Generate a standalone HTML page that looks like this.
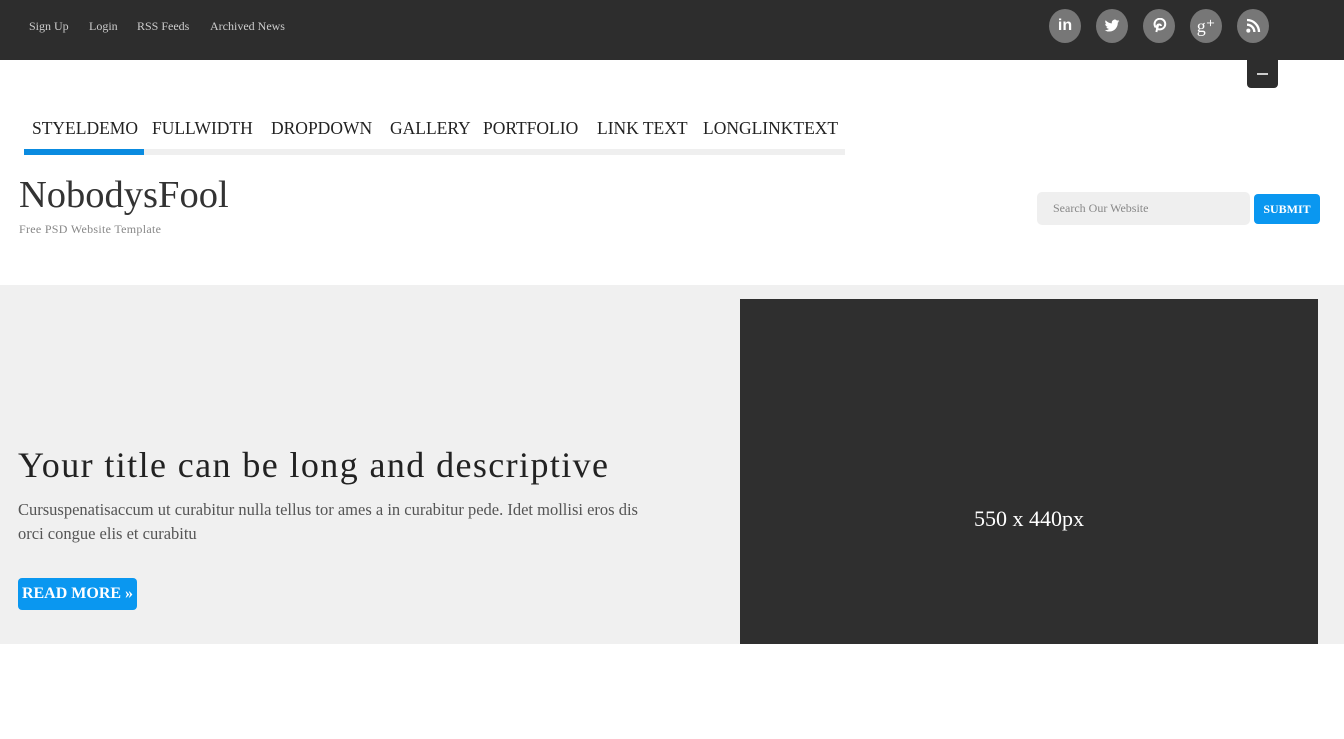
<!DOCTYPE html>
<html><head><style>
body{margin:0;width:1344px;height:644px;overflow:hidden;font-family:"Liberation Serif",serif;background:#fff;position:relative}
.top{position:absolute;left:0;top:0;width:1344px;height:60px;background:#2d2d2d}
.tl{position:absolute;top:19px;font-size:12px;color:#ccc}
.ic{position:absolute;top:9px;width:32px;height:34px;border-radius:50%;background:#777;color:#fff;text-align:center;line-height:34px;font-family:"Liberation Sans",sans-serif;font-weight:bold;font-size:16px}
.ic svg{position:absolute;left:8px;top:9px}
.tab{position:absolute;left:1247px;top:60px;width:31px;height:28px;background:#2d2d2d;border-radius:0 0 4px 4px}
.tab:after{content:"";position:absolute;left:10px;top:13px;width:11px;height:2px;background:#ccc}
.nav{position:absolute;top:118px;font-size:17.5px;color:#222}
.bar{position:absolute;left:24px;top:149px;width:821px;height:6px;background:#efefef}
.bar i{position:absolute;left:0;top:0;width:120px;height:6px;background:#0a8be0}
.logo{position:absolute;left:19px;top:173px;font-size:38.5px;color:#333}
.sub{position:absolute;left:19px;top:222px;font-size:12px;color:#888;letter-spacing:.3px}
.search{position:absolute;left:1037px;top:192px;width:213px;height:33px;background:#efefef;border-radius:5px;font-size:12px;color:#888;line-height:33px;text-indent:16px}
.btn{position:absolute;left:1254px;top:194px;width:66px;height:30px;background:#0a97f0;border-radius:4px;color:#fff;font-weight:bold;font-size:12px;text-align:center;line-height:30px}
.hero{position:absolute;left:0;top:285px;width:1344px;height:359px;background:#f0f0f0}
.img{position:absolute;left:740px;top:299px;width:578px;height:345px;background:#2f2f2f;color:#fff;font-size:22px;text-align:center;line-height:440px}
h1{position:absolute;left:18px;top:444px;margin:0;font-weight:normal;font-size:36px;color:#222;letter-spacing:1.4px}
.p{position:absolute;left:18px;top:498px;width:620px;font-size:16.5px;line-height:24px;color:#555}
.rm{position:absolute;left:18px;top:578px;width:119px;height:32px;background:#0a97f0;border-radius:4px;color:#fff;font-weight:bold;font-size:16px;text-align:center;line-height:32px}
</style></head><body>
<div class="top"></div>
<span class="tl" style="left:29px">Sign Up</span><span class="tl" style="left:89px">Login</span><span class="tl" style="left:137px">RSS Feeds</span><span class="tl" style="left:210px">Archived News</span>
<div class="ic" style="left:1049px">in</div>
<div class="ic" style="left:1096px"><svg width="16" height="16" viewBox="0 0 24 24"><path fill="#fff" d="M23 4.6a9 9 0 0 1-2.6.7 4.5 4.5 0 0 0 2-2.5 9 9 0 0 1-2.9 1.1A4.5 4.5 0 0 0 11.8 8 12.8 12.8 0 0 1 2.5 3.3a4.5 4.5 0 0 0 1.4 6 4.5 4.5 0 0 1-2-.6 4.5 4.5 0 0 0 3.6 4.5 4.5 4.5 0 0 1-2 .1 4.5 4.5 0 0 0 4.2 3.1A9 9 0 0 1 1 18.3 12.8 12.8 0 0 0 7.9 20.3c8.3 0 12.8-6.9 12.8-12.8v-.6A9 9 0 0 0 23 4.6z"/></svg></div>
<div class="ic" style="left:1143px"><svg width="16" height="16" viewBox="0 0 24 24"><path fill="none" stroke="#fff" stroke-width="3" d="M8 21l3-12M7 14a8 8 0 1 1 5 3c-3 0-4-2-3-5 1-3 6-3 6 0"/></svg></div>
<div class="ic" style="left:1190px;font-family:'Liberation Serif',serif;font-weight:normal;font-size:18px">g⁺</div>
<div class="ic" style="left:1237px"><svg width="16" height="16" viewBox="0 0 24 24"><circle cx="5" cy="19" r="3" fill="#fff"/><path fill="none" stroke="#fff" stroke-width="3.5" d="M3 10a11 11 0 0 1 11 11M3 3a18 18 0 0 1 18 18"/></svg></div>
<div class="tab"></div>
<span class="nav" style="left:32px">STYELDEMO</span><span class="nav" style="left:152px">FULLWIDTH</span><span class="nav" style="left:271px">DROPDOWN</span><span class="nav" style="left:390px">GALLERY</span><span class="nav" style="left:483px">PORTFOLIO</span><span class="nav" style="left:597px">LINK TEXT</span><span class="nav" style="left:703px">LONGLINKTEXT</span>
<div class="bar"><i></i></div>
<div class="logo">NobodysFool</div><div class="sub">Free PSD Website Template</div>
<div class="search">Search Our Website</div><div class="btn">SUBMIT</div>
<div class="hero"></div>
<div class="img">550 x 440px</div>
<h1>Your title can be long and descriptive</h1>
<div class="p">Cursuspenatisaccum ut curabitur nulla tellus tor ames a in curabitur pede. Idet mollisi eros dis orci congue elis et curabitu</div>
<div class="rm">READ MORE »</div>
</body></html>
